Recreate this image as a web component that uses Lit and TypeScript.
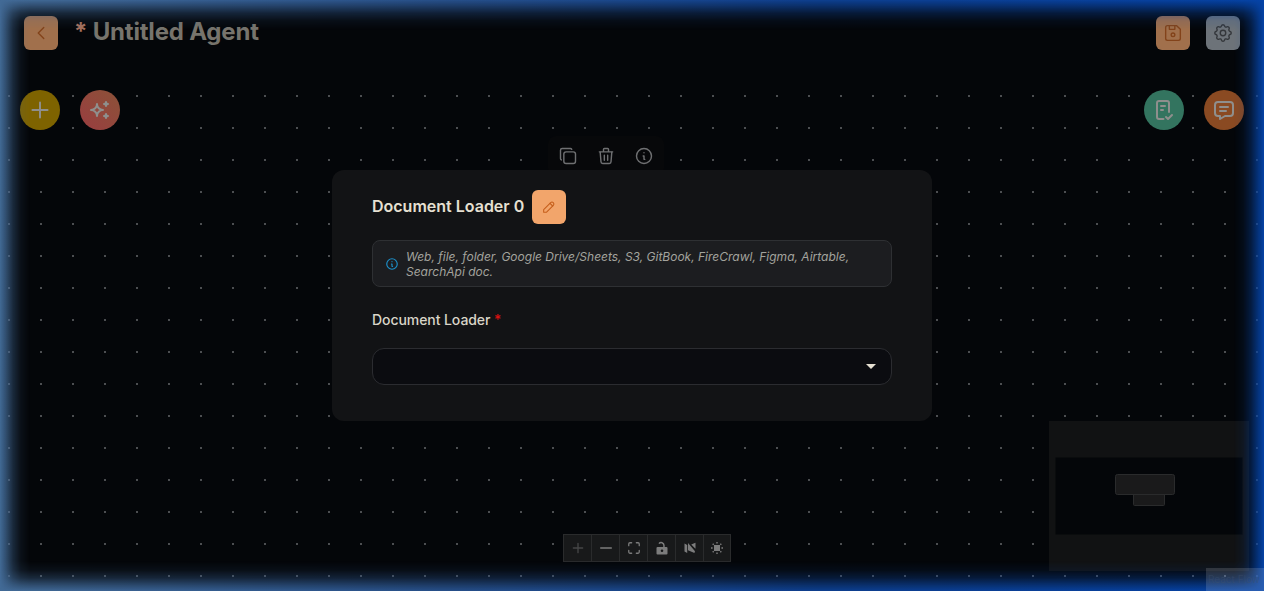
import { LitElement, css, html, svg } from 'lit'
import { customElement } from 'lit/decorators.js'

const icon = (size: number, body: unknown, stroke = 2) => html`
  <svg width=${size} height=${size} viewBox="0 0 24 24" fill="none" stroke="currentColor"
    stroke-width=${stroke} stroke-linecap="round" stroke-linejoin="round">${body}</svg>
`

const chevronLeft = svg`<path d="M15 6l-6 6 6 6"/>`
const save = svg`<path d="M6 4h10l4 4v10a2 2 0 0 1-2 2H6a2 2 0 0 1-2-2V6a2 2 0 0 1 2-2"/><circle cx="12" cy="14" r="2"/><path d="M14 4v4H8V4"/>`
const gear = svg`<path d="M10.325 4.317c.426-1.756 2.924-1.756 3.35 0a1.724 1.724 0 0 0 2.573 1.066c1.543-.94 3.31.826 2.37 2.37a1.724 1.724 0 0 0 1.065 2.572c1.756.426 1.756 2.924 0 3.35a1.724 1.724 0 0 0-1.066 2.573c.94 1.543-.826 3.31-2.37 2.37a1.724 1.724 0 0 0-2.572 1.065c-.426 1.756-2.924 1.756-3.35 0a1.724 1.724 0 0 0-2.573-1.066c-1.543.94-3.31-.826-2.37-2.37a1.724 1.724 0 0 0-1.065-2.572c-1.756-.426-1.756-2.924 0-3.35a1.724 1.724 0 0 0 1.066-2.573c-.94-1.543.826-3.31 2.37-2.37 1 .608 2.296.07 2.572-1.065"/><circle cx="12" cy="12" r="3"/>`
const plus = svg`<path d="M12 5v14M5 12h14"/>`
const sparkles = svg`<path d="M16 18a2 2 0 0 1 2 2 2 2 0 0 1 2-2 2 2 0 0 1-2-2 2 2 0 0 1-2 2m0-12a2 2 0 0 1 2 2 2 2 0 0 1 2-2 2 2 0 0 1-2-2 2 2 0 0 1-2 2M9 18a6 6 0 0 1 6-6 6 6 0 0 1-6-6 6 6 0 0 1-6 6 6 6 0 0 1 6 6"/>`
const checklist = svg`<path d="M11.5 21H7a2 2 0 0 1-2-2V5a2 2 0 0 1 2-2h8a2 2 0 0 1 2 2v9"/><path d="M14 19l2 2 4-4"/><path d="M9 8h4M9 12h2"/>`
const message = svg`<path d="M8 9h8M8 13h6"/><path d="M18 4a3 3 0 0 1 3 3v8a3 3 0 0 1-3 3h-5l-5 3v-3H6a3 3 0 0 1-3-3V7a3 3 0 0 1 3-3z"/>`
const copy = svg`<path d="M7 9.67A2.67 2.67 0 0 1 9.67 7h8.66A2.67 2.67 0 0 1 21 9.67v8.66A2.67 2.67 0 0 1 18.33 21H9.67A2.67 2.67 0 0 1 7 18.33z"/><path d="M4.01 16.74A2 2 0 0 1 3 15V5c0-1.1.9-2 2-2h10c.75 0 1.16.38 1.5 1"/>`
const trash = svg`<path d="M4 7h16M10 11v6M14 11v6M5 7l1 12a2 2 0 0 0 2 2h8a2 2 0 0 0 2-2l1-12M9 7V4a1 1 0 0 1 1-1h4a1 1 0 0 1 1 1v3"/>`
const info = svg`<circle cx="12" cy="12" r="9"/><path d="M12 8h.01M11 12h1v4h1"/>`
const pencil = svg`<path d="M4 20h4L18.5 9.5a2.83 2.83 0 0 0-4-4L4 16z"/><path d="M13.5 6.5l4 4"/>`

@customElement('app-root')
export class AppRoot extends LitElement {
  static styles = css`
    :host {
      display: block;
      font-family: Inter, "Liberation Sans", sans-serif;
    }
    .page {
      position: relative;
      height: 591px;
      overflow: hidden;
      background: #040609;
    }
    .header {
      display: flex;
      align-items: flex-start;
      box-sizing: border-box;
      height: 66px;
      padding: 16px 24px 0;
      background: #040609;
    }
    .back { margin-right: 16px; }
    .title {
      flex: 1;
      font-size: 24px;
      font-weight: 700;
      letter-spacing: -0.2px;
      line-height: 32px;
      color: #77746c;
    }
    .title b { font-weight: 700; color: #a5705c; }
    .header .actions { display: flex; gap: 16px; }
    .square {
      display: flex;
      align-items: center;
      justify-content: center;
      width: 34px;
      height: 34px;
      border-radius: 6px;
    }
    .orange-dim { background: #a1704c; color: #83431a; }
    .grey-dim { background: #6d7379; color: #34373b; }
    .canvas {
      position: absolute;
      inset: 80px 0 0 0;
      background-image: radial-gradient(circle at center, #4c4e51 0.8px, transparent 1.1px);
      background-size: 32px 32px;
      background-position: -7px 0;
    }
    .fabs {
      position: absolute;
      top: 90px;
      display: flex;
      gap: 20px;
    }
    .fabs.left { left: 20px; }
    .fabs.right { right: 20px; }
    .fab {
      display: flex;
      align-items: center;
      justify-content: center;
      width: 40px;
      height: 40px;
      border-radius: 50%;
      color: #8f8f8d;
    }
    .yellow { background: #7e6300; }
    .red { background: linear-gradient(45deg, #9a3d40, #8b5238); }
    .green { background: #33745f; }
    .rust { background: #8a4a22; }
    .toolbar {
      position: absolute;
      left: 548px;
      top: 136px;
      display: flex;
      align-items: center;
      gap: 18px;
      height: 40px;
      padding: 0 10px;
      border-radius: 8px;
      background: #07080a;
      color: #6f7072;
    }
    .card {
      position: absolute;
      left: 332px;
      top: 170px;
      box-sizing: border-box;
      width: 600px;
      height: 251px;
      padding: 20px 40px;
      border-radius: 12px;
      background: #121315;
    }
    .card-head {
      display: flex;
      align-items: center;
      gap: 8px;
      height: 34px;
      font-size: 16px;
      font-weight: 600;
      color: #e6e0d2;
    }
    .card-head span { margin-bottom: 2px; }
    .edit { background: #f2a56b; color: #c65f1c; }
    .note {
      display: flex;
      align-items: center;
      gap: 7px;
      box-sizing: border-box;
      height: 47px;
      margin-top: 16px;
      padding: 0 12px;
      border: 1px solid #2e3033;
      border-radius: 8px;
      background: #1c1d20;
      color: #a3a39d;
      font-size: 12px;
      font-style: italic;
      line-height: 15px;
    }
    .note svg { flex: none; color: #1c8fc9; }
    .label {
      margin-top: 23px;
      font-size: 14px;
      font-weight: 500;
      letter-spacing: -0.07px;
      line-height: 20px;
      color: #d9d5c8;
    }
    .label span { color: #d81010; }
    .select {
      display: flex;
      align-items: center;
      justify-content: flex-end;
      box-sizing: border-box;
      height: 37px;
      margin-top: 18px;
      padding-right: 15px;
      border: 1px solid #2b2c30;
      border-radius: 12px;
      background: #0b0c10;
    }
    .caret {
      width: 0;
      height: 0;
      border-left: 5px solid transparent;
      border-right: 5px solid transparent;
      border-top: 5px solid #e6e0d2;
    }
    .controls {
      position: absolute;
      left: 563px;
      top: 534px;
      display: flex;
      border: 1px solid #2a2b2c;
      background: #2a2b2c;
      gap: 1px;
      color: #7c7c7c;
    }
    .controls div {
      display: flex;
      align-items: center;
      justify-content: center;
      width: 27px;
      height: 26px;
      background: #18191a;
    }
    .controls div:last-child { width: 26px; }
    .controls .off { color: #454647; }
    .minimap {
      position: absolute;
      left: 1049px;
      top: 421px;
      width: 200px;
      height: 150px;
      background: #111213;
    }
    .minimap svg { display: block; }
    .attribution {
      position: absolute;
      right: 0;
      bottom: 0;
      width: 58px;
      height: 23px;
      padding-left: 2px;
      box-sizing: border-box;
      background: rgba(255, 255, 255, 0.14);
      color: rgba(60, 80, 110, 0.45);
      font-size: 10px;
      line-height: 23px;
      white-space: nowrap;
      overflow: hidden;
    }
    .glow {
      --fade: #000 0, rgba(0, 0, 0, 0.72) 6px, rgba(0, 0, 0, 0.36) 13px, rgba(0, 0, 0, 0.1) 21px, transparent 30px;
      position: absolute;
      inset: 0;
      pointer-events: none;
      background: linear-gradient(90deg, #426a96 0, #27508a 35%, #0d3f8f 65%, #0543a6 100%);
      mask-image:
        linear-gradient(180deg, var(--fade)),
        linear-gradient(0deg, var(--fade)),
        linear-gradient(90deg, var(--fade)),
        linear-gradient(270deg, var(--fade));
    }
  `

  render() {
    return html`
      <div class="page">
        <div class="header">
          <div class="square orange-dim back">${icon(22, chevronLeft, 1.5)}</div>
          <div class="title"><b>*</b> Untitled Agent</div>
          <div class="actions">
            <div class="square orange-dim">${icon(22, save, 1.5)}</div>
            <div class="square grey-dim">${icon(22, gear, 1.5)}</div>
          </div>
        </div>
        <div class="canvas"></div>
        <div class="fabs left">
          <div class="fab yellow">${icon(26, plus, 1.8)}</div>
          <div class="fab red">${icon(24, sparkles, 2)}</div>
        </div>
        <div class="fabs right">
          <div class="fab green">${icon(24, checklist, 2)}</div>
          <div class="fab rust">${icon(24, message, 2)}</div>
        </div>
        <div class="toolbar">
          ${icon(20, copy, 1.7)}${icon(20, trash, 1.7)}${icon(20, info, 1.7)}
        </div>
        <div class="card">
          <div class="card-head">
            <span>Document Loader 0</span>
            <div class="square edit">${icon(16, pencil, 1.6)}</div>
          </div>
          <div class="note">
            ${icon(14, info, 2)}
            <div>Web, file, folder, Google Drive/Sheets, S3, GitBook, FireCrawl, Figma, Airtable, SearchApi doc.</div>
          </div>
          <div class="label">Document Loader <span>*</span></div>
          <div class="select"><div class="caret"></div></div>
        </div>
        <div class="controls">
          <div class="off">${icon(16, plus, 2)}</div>
          <div>${icon(16, svg`<path d="M4 12h16"/>`, 2)}</div>
          <div>${icon(14, svg`<path d="M3 8V5a2 2 0 0 1 2-2h3M16 3h3a2 2 0 0 1 2 2v3M21 16v3a2 2 0 0 1-2 2h-3M8 21H5a2 2 0 0 1-2-2v-3"/>`, 2.2)}</div>
          <div>
            <svg width="12" height="14" viewBox="0 0 12 14"><path fill="currentColor" fill-rule="evenodd" d="M1.5 6H7.2V4.2a2 2 0 0 0-3.6-1.1L2.4 2.2A3.5 3.5 0 0 1 8.7 4.2V6h1.8a1 1 0 0 1 1 1v5.5a1 1 0 0 1-1 1h-9a1 1 0 0 1-1-1V7a1 1 0 0 1 1-1zM6 8.4a1.3 1.3 0 1 0 0 2.6 1.3 1.3 0 0 0 0-2.6z"/></svg>
          </div>
          <div>
            <svg width="12" height="12" viewBox="0 0 12 12"><path fill="currentColor" d="M0.5 1.5 3.2 3v8L.5 9.5zM4 1l7 8.2-.6 1.8L4 8.2zM7.2 2.4 11.5.8v6z"/></svg>
          </div>
          <div>
            <svg width="12" height="12" viewBox="0 0 12 12" fill="currentColor"><rect x="3" y="3" width="6" height="6"/><path d="M5.3 0h1.4v1.6H5.3zM5.3 10.4h1.4V12H5.3zM0 5.3h1.6v1.4H0zM10.4 5.3H12v1.4h-1.6zM1.2 2.2l1-1 1 1-1 1zM8.8 2.2l1-1 1 1-1 1zM1.2 9.8l1-1 1 1-1 1zM8.8 9.8l1-1 1 1-1 1z"/></svg>
          </div>
        </div>
        <div class="minimap">
          <svg width="200" height="150" viewBox="0 0 200 150">
            <rect x="6.5" y="36.5" width="187" height="77" fill="#040609"/>
            <rect x="84.5" y="72.5" width="31" height="12" rx="1" fill="#1a1a1b" stroke="#2a2b2c"/>
            <rect x="66.5" y="53.5" width="59" height="20" rx="2" fill="#1a1a1b" stroke="#2a2b2c"/>
          </svg>
        </div>
        <div class="glow"></div>
        <div class="attribution">React Flow</div>
      </div>
    `
  }
}
